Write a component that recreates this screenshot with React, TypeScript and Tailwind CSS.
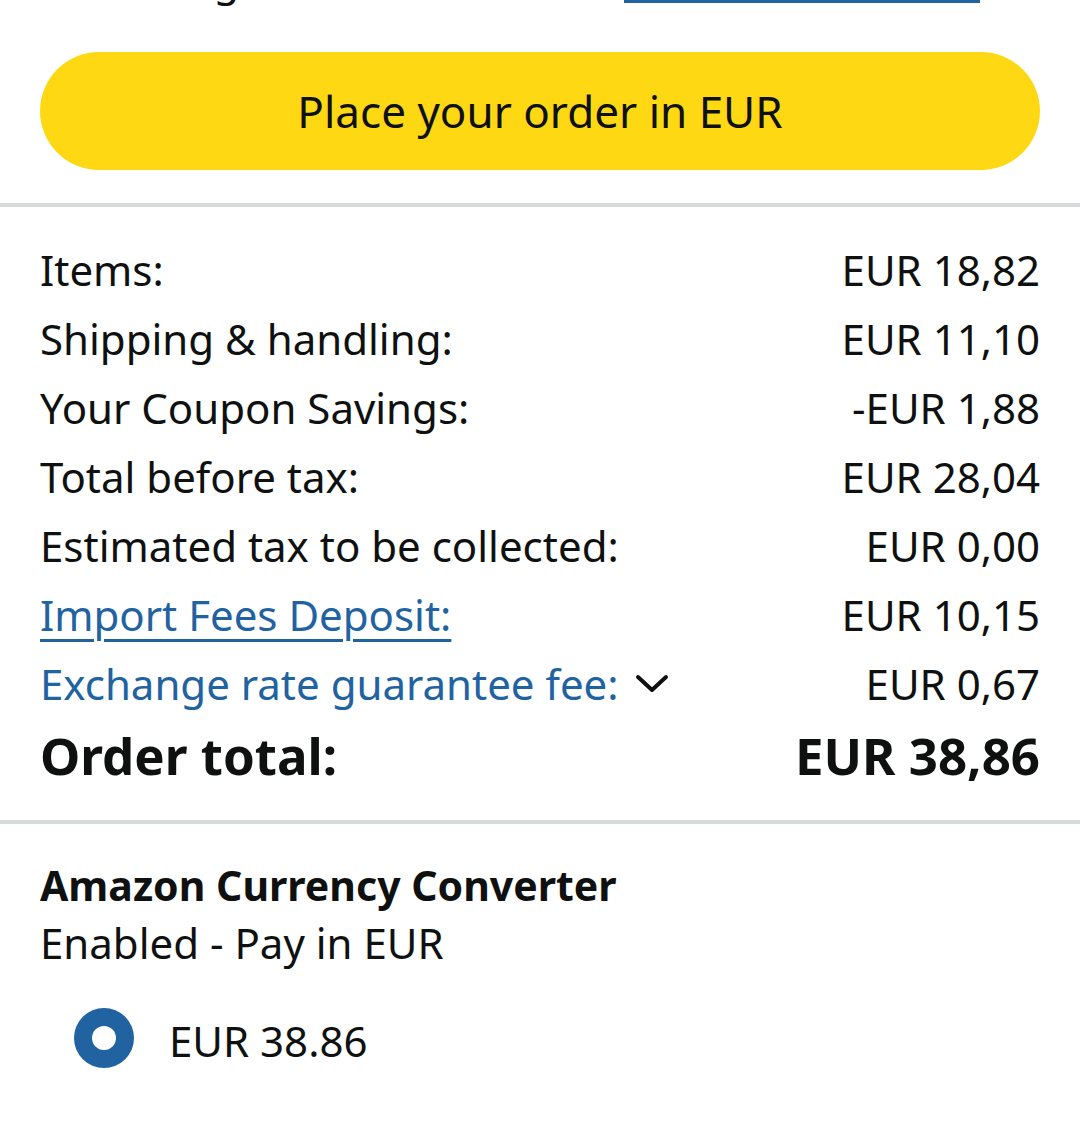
import React from 'react';

const rows = [
  { label: 'Items:', value: 'EUR 18,82' },
  { label: 'Shipping & handling:', value: 'EUR 11,10' },
  { label: 'Your Coupon Savings:', value: '-EUR 1,88' },
  { label: 'Total before tax:', value: 'EUR 28,04' },
  { label: 'Estimated tax to be collected:', value: 'EUR 0,00' },
];

function Divider() {
  return <div className="h-1 w-full bg-[#d5dbdb]" />;
}

function Chevron() {
  return (
    <svg width="34" height="20" viewBox="0 0 34 20" className="ml-[16px]">
      <path d="M3 3 L17 16 L31 3" fill="none" stroke="#0f1111" strokeWidth="4" strokeLinecap="round" strokeLinejoin="round" />
    </svg>
  );
}

export default function App() {
  return (
    <div
      className="min-h-screen bg-white text-[#0f1111] overflow-hidden"
      style={{ fontFamily: '"Noto Sans", "Open Sans", sans-serif' }}
    >
      {/* previous section, scrolled off the top */}
      <div className="-mt-[44px] flex h-[47px] items-end justify-between px-10 text-[42px] leading-[47px]">
        <span className="pl-[86px]">Using</span>
        <span className="mr-[60px] w-[356px] border-b-[3px] border-[#2162a1]" />
      </div>

      <div className="px-10 pt-[49px] pb-[33px]">
        <button className="flex h-[118px] w-full items-center justify-center rounded-full bg-[#ffd814] text-[44px] text-[#0f1111]">
          Place your order in EUR
        </button>
      </div>

      <Divider />

      <div className="px-10 pt-[28px] pb-[27px] text-[42px] leading-[69px]">
        {rows.map((r) => (
          <div key={r.label} className="flex justify-between">
            <span>{r.label}</span>
            <span>{r.value}</span>
          </div>
        ))}
        <div className="flex justify-between">
          <a className="text-[#2162a1] underline decoration-[3px] underline-offset-[8px]">Import Fees Deposit:</a>
          <span>EUR 10,15</span>
        </div>
        <div className="flex justify-between">
          <span className="flex items-center text-[#2162a1]">
            Exchange rate guarantee fee:
            <Chevron />
          </span>
          <span>EUR 0,67</span>
        </div>
        <div className="flex justify-between text-[51px] font-bold leading-[75px]">
          <span>Order total:</span>
          <span>EUR 38,86</span>
        </div>
      </div>

      <Divider />

      <div className="px-10 pt-[32px] text-[42px] leading-[58px]">
        <div className="text-[41px] font-bold">Amazon Currency Converter</div>
        <div>Enabled - Pay in EUR</div>
        <div className="mt-[34px] flex items-center pl-[34px]">
          <span className="flex h-[60px] w-[60px] items-center justify-center rounded-full bg-[#2162a1]">
            <span className="h-[24px] w-[24px] rounded-full bg-white" />
          </span>
          <span className="ml-[35px] pt-[6px]">EUR 38.86</span>
        </div>
      </div>
    </div>
  );
}
